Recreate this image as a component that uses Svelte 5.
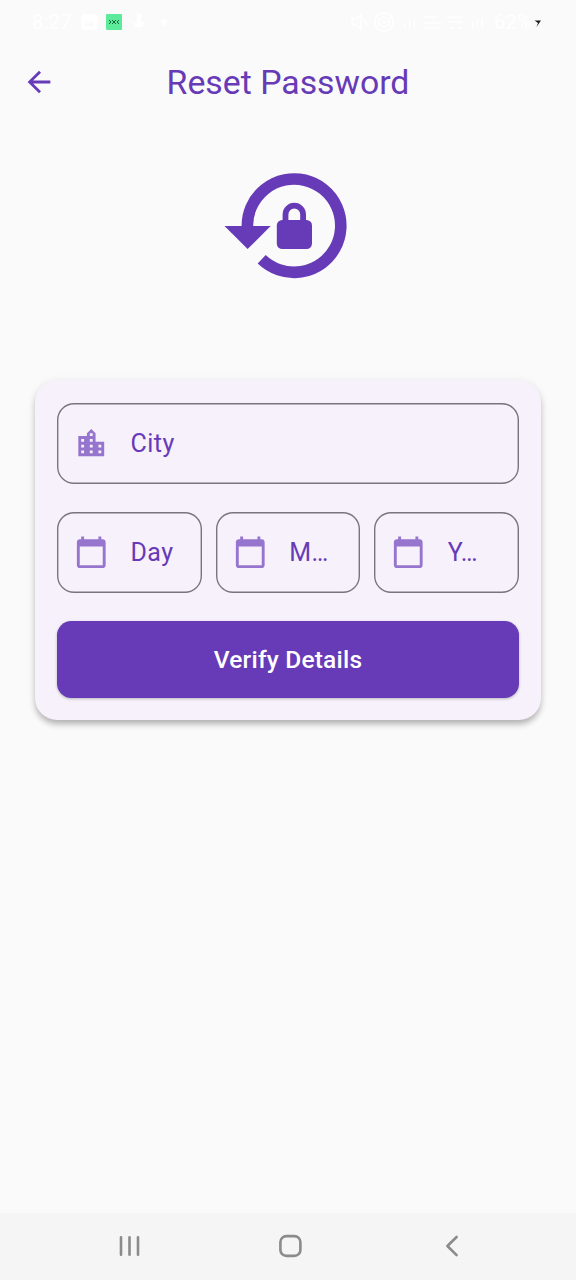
<script>
  const dateFields = ['Day', 'M…', 'Y…'];
</script>

<main class="screen">
  <header class="status">
    <div class="side">
      <span class="clock">8:27</span>
      <svg class="gallery" width="17" height="16" viewBox="0 0 17 16"><path fill="#fff" fill-rule="evenodd" d="M3 0h11q3 0 3 3v10q0 3-3 3H3q-3 0-3-3V3q0-3 3-3zm0 12h11L10 7l-3 3-2-2z" /></svg>
      <svg class="app" width="16" height="16" viewBox="0 0 16 16">
        <rect width="16" height="16" rx="1" fill="#5cea9b" />
        <path d="M3 6l2 2-2 2M6 6l4 4M10 6L6 10M13 6l-2 2 2 2" fill="none" stroke="#17613c" stroke-width="1" />
      </svg>
      <svg class="bell" width="12" height="16" viewBox="0 0 12 16"><path fill="#fff" d="M4 0h4v8h4l-3 5H3L0 9h4z" /></svg>
      <span class="dot"></span>
    </div>
    <div class="side right">
      <svg width="17" height="18" viewBox="0 0 17 18" fill="none" stroke="#fff" stroke-width="1.6"><path d="M1 6h4l5-4v14l-5-4H1zM12 5l4 8" /></svg>
      <svg width="20" height="20" viewBox="0 0 20 20" fill="none" stroke="#fff" stroke-width="1.6"><circle cx="10" cy="10" r="9" /><circle cx="10" cy="10" r="5" /><circle cx="10" cy="10" r="1" /></svg>
      <svg width="88" height="18" viewBox="0 0 92 18" fill="none" stroke="#fff" stroke-width="1.4"><path d="M5 16v-5M10 16V8M15 16V6M25 4h15M25 10h18M25 15h18M50 4h15M50 9h15M53 15h4M60 15h4M76 16V9M81 16V6M86 16V5" /></svg>
      <span class="battery">62%</span>
      <svg class="bolt" width="8" height="7" viewBox="0 0 7 7"><path d="M0 .5h6.5L2 7 3.5 3z" fill="#1c1c1c" /></svg>
    </div>
  </header>

  <div class="appbar">
    <svg class="back" viewBox="0 0 24 24"><path fill="#673ab7" d="M20 11H7.83l5.59-5.59L12 4l-8 8 8 8 1.41-1.41L7.83 13H20v-2z" /></svg>
    <h1>Reset Password</h1>
  </div>

  <div class="hero">
    <svg width="124" height="108" viewBox="224 172 124 108">
      <path d="M247.4 227A46.7 46.7 0 1 1 261.7 259.3" fill="none" stroke="#673ab7" stroke-width="11.6" />
      <path d="M224.5 226h46.2L247.6 249z" fill="#673ab7" />
      <rect x="276.8" y="220" width="35.2" height="29" rx="5.5" fill="#673ab7" />
      <path d="M285.5 221v-6.6a8.8 8.8 0 0 1 17.6 0v6.6" fill="none" stroke="#673ab7" stroke-width="5.8" />
    </svg>
  </div>

  <section class="card">
    <div class="field">
      <svg class="icon" viewBox="0 0 24 24"><path d="M15 11V5l-3-3-3 3v2H3v14h18V11h-6zm-8 8H5v-2h2v2zm0-4H5v-2h2v2zm0-4H5V9h2v2zm6 8h-2v-2h2v2zm0-4h-2v-2h2v2zm0-4h-2V9h2v2zm0-4h-2V5h2v2zm6 12h-2v-2h2v2zm0-4h-2v-2h2v2z" /></svg>
      <span>City</span>
    </div>
    <div class="row">
      {#each dateFields as label}
        <div class="field">
          <svg class="icon" viewBox="0 0 24 24"><path d="M20 3h-1V1h-2v2H7V1H5v2H4c-1.1 0-2 .9-2 2v16c0 1.1.9 2 2 2h16c1.1 0 2-.9 2-2V5c0-1.1-.9-2-2-2zm0 18H4V8h16v13z" /></svg>
          <span>{label}</span>
        </div>
      {/each}
    </div>
    <button>Verify Details</button>
  </section>

  <nav>
    <svg width="22" height="24" viewBox="0 0 22 24" fill="none" stroke="#8b8b8b" stroke-width="2.6" stroke-linecap="round"><path d="M3 3.2v17.6M11.5 3.2v17.6M20 3.2v17.6" /></svg>
    <svg class="home" width="24" height="24" viewBox="0 0 24 24" fill="none" stroke="#8b8b8b" stroke-width="2.6"><rect x="2.4" y="2.1" width="20" height="19.8" rx="6" /></svg>
    <svg width="14" height="24" viewBox="0 0 14 24" fill="none" stroke="#8b8b8b" stroke-width="2.6" stroke-linecap="round" stroke-linejoin="round"><path d="M11.6 3L2.4 12l9.2 9.2" /></svg>
  </nav>
</main>

<style>
  :global(body) {
    background: #fafafa;
  }
  .screen {
    width: 576px;
    height: 1280px;
    box-sizing: border-box;
    display: flex;
    flex-direction: column;
    background: #fafafa;
    font-family: Roboto, sans-serif;
    overflow: hidden;
  }
  svg {
    display: block;
    flex: none;
  }
  .status {
    height: 43px;
    padding: 0 34px 0 32px;
    display: flex;
    justify-content: space-between;
    align-items: center;
    color: #fff;
    font-size: 20.5px;
    flex: none;
  }
  .side {
    display: flex;
    align-items: center;
  }
  .clock {
    width: 49px;
  }
  .app {
    margin-left: 8px;
  }
  .bell {
    margin-left: 11px;
  }
  .dot {
    width: 6px;
    height: 6px;
    margin-left: 16px;
    border-radius: 50%;
    background: #fff;
  }
  .right {
    gap: 6px;
  }
  .bolt {
    margin: 4px 0 0 -4px;
  }
  .appbar {
    height: 78px;
    display: grid;
    grid-template-columns: 78px 1fr 78px;
    align-items: center;
    flex: none;
  }
  .back {
    width: 34px;
    height: 34px;
    margin-left: 22px;
  }
  h1 {
    margin: 0;
    padding-top: 2px;
    font-size: 33.8px;
    line-height: 40px;
    font-weight: 400;
    text-align: center;
    color: #673ab7;
    white-space: nowrap;
  }
  .hero {
    height: 259px;
    box-sizing: border-box;
    padding: 51px 0 0 224px;
    flex: none;
  }
  .card {
    margin: 0 35px;
    height: 340px;
    box-sizing: border-box;
    padding: 23px 22px 22px;
    border-radius: 22px;
    background: #f6f1fa;
    display: flex;
    flex-direction: column;
    justify-content: space-between;
    box-shadow: 0 5px 6px -1px rgba(0, 0, 0, 0.24), 0 2px 8px rgba(0, 0, 0, 0.1);
    flex: none;
  }
  .field {
    height: 81px;
    box-sizing: border-box;
    padding-left: 17px;
    border-radius: 17px;
    box-shadow: inset 0 0 0 1.4px #79747e;
    display: flex;
    align-items: center;
    gap: 22px;
    min-width: 0;
    color: #673ab7;
    font-size: 25px;
    letter-spacing: 0.45px;
  }
  .field span {
    line-height: 30px;
    padding-top: 1px;
  }
  .row {
    display: grid;
    grid-template-columns: repeat(3, 1fr);
    gap: 14px;
  }
  .icon {
    width: 34.5px;
    height: 34.5px;
    fill: #9575cd;
  }
  button {
    height: 77px;
    border: 0;
    padding: 0;
    border-radius: 14.4px;
    background: #673ab7;
    color: #fff;
    font: 500 24.5px Roboto, sans-serif;
    letter-spacing: 0.2px;
    box-shadow: 0 1px 3px rgba(0, 0, 0, 0.25);
  }
  nav {
    margin-top: auto;
    height: 67px;
    background: #f5f5f5;
    display: flex;
    align-items: center;
    justify-content: space-between;
    padding: 0 117px 2px 118px;
    box-sizing: border-box;
    flex: none;
  }
  .home {
    margin-right: 5px;
  }
</style>
